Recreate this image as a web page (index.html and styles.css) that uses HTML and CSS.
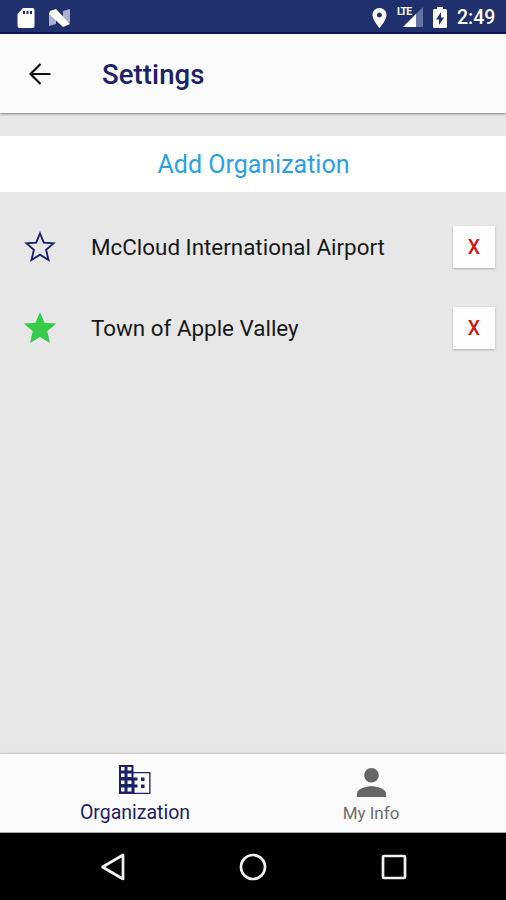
FILE: index.html
```html
<!DOCTYPE html>
<html lang="en">
<head>
<meta charset="utf-8">
<title>Settings</title>
<link rel="stylesheet" href="styles.css">
</head>
<body>
<div class="screen">
  <div class="status">
    <svg class="sd" viewBox="0 0 18 20"><path fill="#fff" fill-rule="evenodd" d="M6 0H15.500Q17.500 0 17.500 2V18Q17.500 20 15.500 20H2.500Q.5 20 .5 18V6ZM6 3V6H8V3ZM9.500 3V6H11.500V3ZM13 3V6H15V3Z"/></svg>
    <svg class="nougat" viewBox="0 0 21 18"><path fill="#a9b0cf" d="M0 4L7 9V15L0 17ZM14 2L21 0V14L14 10Z"/><path fill="#fff" d="M1 2L7 0L21 15L14 18L0 5Z"/></svg>
    <span class="spacer"></span>
    <svg class="pin" viewBox="5 2 14 20"><path fill="#fff" d="M12 2C8.130 2 5 5.130 5 9c0 5.250 7 13 7 13s7-7.750 7-13c0-3.870-3.130-7-7-7zm0 9.500a2.500 2.500 0 1 1 0-5 2.500 2.500 0 0 1 0 5z"/></svg>
    <span class="signal"><svg viewBox="0 0 20 20"><path fill="#6672a2" d="M20 0V20H0Z"/><path fill="#fff" d="M13 7V20H0Z"/></svg><b class="lte">LTE</b></span>
    <svg class="battery" viewBox="0 0 14 21"><path fill="#fff" fill-rule="evenodd" d="M4 0H10V2H12.500Q14 2 14 3.500V19.500Q14 21 12.500 21H1.500Q0 21 0 19.500V3.500Q0 2 1.500 2H4ZM8 5L3 12.500H6V18L11 10.500H8Z"/></svg>
    <span class="time">2:49</span>
  </div>
  <header class="header">
    <svg class="back" viewBox="0 0 22 22"><path d="M21.500 11H1.500M11.500 1L1.500 11L11.500 21"/></svg>
    <h1 class="title">Settings</h1>
  </header>
  <main class="content">
    <button class="add"><span>Add Organization</span></button>
    <div class="row">
      <svg class="star" viewBox="0 0 38 38"><path fill="none" stroke="#1b2167" stroke-width="1.900" d="M19 5.500L22.800 14.700L32.500 15.400L25.100 21.900L27.500 32L19 26.700L10.500 32L12.900 21.900L5.500 15.400L15.200 14.700Z"/></svg>
      <span class="name">McCloud International Airport</span>
      <button class="remove">X</button>
    </div>
    <div class="row">
      <svg class="star" viewBox="0 0 38 38"><path fill="#37cb4c" d="M19 3L23.500 13.700L35.200 14.600L26.300 22.300L29 34L19 27.900L9 34L11.700 22.300L2.800 14.600L14.500 13.700Z"/></svg>
      <span class="name">Town of Apple Valley</span>
      <button class="remove">X</button>
    </div>
  </main>
  <nav class="tabs">
    <div class="tab active">
      <svg class="building" viewBox="0 0 32 29"><path fill="#1b2167" fill-rule="evenodd" d="M0 0H14.500V7H31.500V29H0ZM2 2V5.500H5.500V2ZM8.500 2V5.500H12.500V2ZM2 8.500V12H5.500V8.500ZM8.500 8.500V12H12.500V8.500ZM2 15.500V19H5.500V15.500ZM8.500 15.500V19H12.500V15.500ZM2 22.500V26.500H5.500V22.500ZM8.500 22.500V26.500H12.500V22.500ZM14.500 8.300V12.500H18.500V15.500H15.500V19.500H18.500V22.500H15.500V27.700H30.200V8.300Z"/><path fill="#1b2167" d="M22 12.500H25.500V16H22ZM22 19.500H25.500V23H22Z"/></svg>
      <span class="label">Organization</span>
    </div>
    <div class="tab">
      <svg class="person" viewBox="4 4 16 16"><path fill="#666" d="M12 12c2.210 0 4-1.790 4-4s-1.790-4-4-4-4 1.790-4 4 1.790 4 4 4zm0 2c-2.670 0-8 1.340-8 4v2h16v-2c0-2.660-5.330-4-8-4z"/></svg>
      <span class="label">My Info</span>
    </div>
  </nav>
  <footer class="navbar">
    <svg viewBox="0 0 28 30"><path d="M24 3V27L3.500 15Z"/></svg>
    <svg viewBox="0 0 28 30"><circle cx="14" cy="15" r="12"/></svg>
    <svg viewBox="0 0 28 30"><rect x="3" y="4" width="22" height="22" rx="1"/></svg>
  </footer>
</div>
</body>
</html>
```
FILE: styles.css
```css
* { box-sizing: border-box; }
body { margin: 0; font-family: Roboto, "Liberation Sans", sans-serif; }
svg { display: block; flex: none; }
button { border: 0; font: inherit; }
.screen { width: 506px; height: 900px; display: flex; flex-direction: column; background: #e7e7e7; overflow: hidden; }
.status { height: 34px; flex: none; display: flex; align-items: center; padding: 0 10px 0 17px; background: #20306c; border-bottom: 2px solid #10145a; color: #fff; }
.sd { width: 18px; height: 20px; margin-top: 3px; }
.nougat { width: 21px; height: 18px; margin: 3px 0 0 14px; }
.spacer { flex: 1; }
.pin { width: 15px; height: 20px; margin: 3px 10px 0 0; }
.signal { position: relative; width: 26px; height: 20px; margin: 2px 10px 0 0; padding-left: 6px; }
.signal svg { width: 20px; height: 20px; }
.lte { position: absolute; left: 0; top: 0; font-size: 10.500px; line-height: 10px; letter-spacing: -.9px; background: #20306c; padding-right: 1px; }
.battery { width: 14px; height: 21px; margin: 2px 10px 0 0; }
.time { font-size: 19.500px; font-weight: 500; line-height: 22px; margin-top: 4px; width: 39px; white-space: nowrap; }
.header { position: relative; height: 79px; flex: none; display: flex; align-items: center; padding: 0 29px; background: #fbfbfb; box-shadow: 0 1px 2px rgba(0,0,0,.45); }
.back { width: 22px; height: 22px; fill: none; stroke: #111; stroke-width: 2.200; }
.title { margin: 3px 0 0 51px; font-size: 27.500px; letter-spacing: .1px; line-height: 32px; font-weight: 500; color: #1b2167; }
.content { flex: 1; display: flex; flex-direction: column; padding-top: 23px; }
.add { height: 56px; margin-bottom: 14px; padding: 2px 0 0 1px; background: #fff; color: #29a1e4; font-size: 25px; line-height: 30px; }
.row { height: 81px; display: flex; align-items: center; padding: 0 11px 0 21px; }
.star { width: 38px; height: 38px; }
.name { flex: 1; margin-left: 32px; font-size: 22.400px; line-height: 28px; color: #181818; white-space: nowrap; }
.remove { width: 42px; height: 42px; padding: 2px 0 0; background: #fdfdfd; color: #d11716; font-size: 19.500px; font-weight: 500; box-shadow: 0 1px 2px rgba(0,0,0,.25); }
.tabs { position: relative; height: 79px; flex: none; display: flex; justify-content: center; background: #fbfbfb; border-bottom: 1px solid #aaa; box-shadow: 0 -1px 2px rgba(0,0,0,.12); }
.tab { width: 236px; display: flex; flex-direction: column; align-items: center; color: #6e6e6e; font-size: 17px; }
.active { color: #1b2167; font-size: 19.500px; }
.building { width: 32px; height: 29px; margin-top: 11px; }
.person { width: 29px; height: 29px; margin-top: 14px; }
.label { line-height: 24px; margin-top: 7px; }
.person + .label { margin-top: 4px; }
.navbar { height: 67px; flex: none; display: flex; justify-content: center; align-items: center; gap: 112.500px; background: #000; }
.navbar svg { width: 28px; height: 30px; fill: none; stroke: #f2f2f2; stroke-width: 2.700; stroke-linejoin: round; }
```
